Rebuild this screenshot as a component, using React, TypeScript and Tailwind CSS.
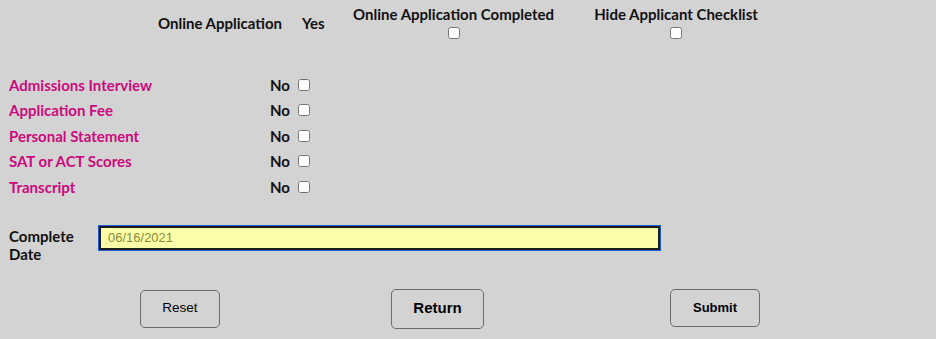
import React from "react";

const items = ["Admissions Interview", "Application Fee", "Personal Statement", "SAT or ACT Scores", "Transcript"];

function Box() {
  return <input type="checkbox" className="m-0 h-[12px] w-[12px]" />;
}

export default function App() {
  return (
    <div className="w-[936px] h-[339px] bg-[#d3d3d3] text-[#111] font-['Lato',sans-serif] text-[15px] font-bold overflow-hidden">
      {/* header row */}
      <div className="flex items-center h-[40px] mt-[3px] pl-[158px]">
        <div className="w-[144px]">Online Application</div>
        <div className="w-[48px]">Yes</div>
        <div className="w-[207px] flex flex-col items-center gap-[4px] -mt-[2px]">
          <span className="leading-[18px]">Online Application Completed</span>
          <Box />
        </div>
        <div className="w-[238px] flex flex-col items-center gap-[4px] -mt-[2px]">
          <span className="leading-[18px]">Hide Applicant Checklist</span>
          <Box />
        </div>
      </div>

      {/* checklist */}
      <div className="mt-[29px] pl-[9px]">
        {items.map((it) => (
          <div key={it} className="flex items-center h-[25.5px]">
            <span className="w-[261px] text-[#cc0a7d]">{it}</span>
            <span>No</span>
            <span className="ml-[8px] flex"><Box /></span>
          </div>
        ))}
      </div>

      {/* complete date */}
      <div className="flex items-start mt-[26px] pl-[9px]">
        <div className="w-[90px] leading-[18px] pt-[1px]">
          Complete
          <br />
          Date
        </div>
        <div className="w-[561px] h-[24px] bg-[#fbfea6] border-2 border-[#1c1c1c] outline outline-1 outline-[#1a5fd0] flex items-center px-[7px] font-['Liberation_Sans',sans-serif] font-normal text-[13px] text-[#8c8a3c]">
          06/16/2021
        </div>
      </div>

      {/* buttons */}
      <div className="flex items-start mt-[26px] font-['Liberation_Sans',sans-serif]">
        <button className="ml-[140px] w-[80px] h-[38px] mt-[1px] border border-[#6b6b6b] rounded-[5px] text-[13.5px] font-normal text-black">
          Reset
        </button>
        <button className="ml-[171px] w-[93px] h-[40px] border border-[#6b6b6b] rounded-[5px] text-[15px] font-bold text-black">
          Return
        </button>
        <button className="ml-[186px] w-[90px] h-[38px] border border-[#6b6b6b] rounded-[5px] text-[13px] font-bold text-black">
          Submit
        </button>
      </div>
    </div>
  );
}
